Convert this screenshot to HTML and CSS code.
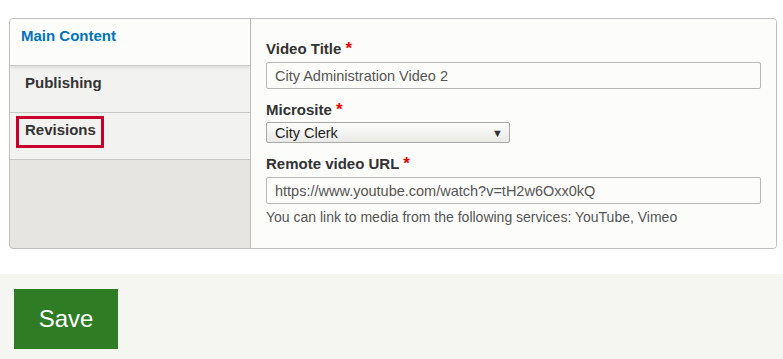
FILE: index.html
```html
<!DOCTYPE html>
<html>
<head>
<meta charset="utf-8">
<link rel="stylesheet" href="styles.css">
</head>
<body>
<div class="page">
  <div class="vtabs">
    <ul class="tab-list">
      <li class="tab active"><span class="tab-title">Main Content</span></li>
      <li class="tab"><span class="tab-title">Publishing</span></li>
      <li class="tab highlighted"><span class="tab-title">Revisions</span><span class="annot"></span></li>
    </ul>
    <div class="pane">
      <div class="field">
        <label class="label">Video Title <span class="req">*</span></label>
        <input class="text" type="text" value="City Administration Video 2">
      </div>
      <div class="field">
        <label class="label">Microsite <span class="req">*</span></label>
        <div class="select"><span>City Clerk</span><span class="arrow">&#9660;</span></div>
      </div>
      <div class="field">
        <label class="label">Remote video URL <span class="req">*</span></label>
        <input class="text" type="text" value="https://www.youtube.com/watch?v=tH2w6Oxx0kQ">
        <div class="desc">You can link to media from the following services: YouTube, Vimeo</div>
      </div>
    </div>
  </div>
  <div class="actions">
    <button class="save">Save</button>
  </div>
</div>
</body>
</html>
```
FILE: styles.css
```css
html, body {
  margin: 0;
  padding: 0;
  background: #fff;
  font-family: "Liberation Sans", Arial, sans-serif;
}
.page {
  padding-top: 18px;
}
.vtabs {
  display: flex;
  margin: 0 6px 0 9px;
  border: 1px solid #bfbfbf;
  border-radius: 4px;
  height: 231px;
  box-sizing: border-box;
  background: #e6e5e1;
  overflow: hidden;
}
.tab-list {
  list-style: none;
  margin: 0;
  padding: 0;
  width: 240px;
  flex: none;
  border-right: 1px solid #bfbfbf;
}
.tab {
  position: relative;
  padding: 8px 0 20px 15px;
  background: #f2f2f0;
  border-bottom: 1px solid #c8c8c6;
  font-size: 15px;
  line-height: 18px;
  font-weight: bold;
  color: #333;
}
.tab.active {
  background: #fcfcfa;
  padding-left: 11px;
  color: #0074bd;
  box-shadow: 0 2px 3px rgba(0,0,0,0.08);
  z-index: 1;
}
.annot {
  position: absolute;
  left: 6px;
  top: 3px;
  width: 82px;
  height: 26px;
  border: 3px solid #c8002b;
}
.pane {
  flex: 1;
  background: #fcfcfa;
  padding: 21px 15px 0 15px;
}
.field {
  margin-bottom: 12px;
}
.label {
  display: block;
  font-size: 15px;
  line-height: 18px;
  font-weight: bold;
  color: #333;
  margin-bottom: 4px;
}
.req {
  color: #e00;
  font-size: 17px;
  line-height: 0;
}
.text {
  display: block;
  box-sizing: border-box;
  width: 100%;
  height: 27px;
  margin: 0;
  border: 1px solid #b8b8b8;
  border-radius: 2px;
  background: #fcfcfa;
  padding: 0 8px;
  font-family: "Liberation Sans", Arial, sans-serif;
  font-size: 14.5px;
  color: #555;
}
.select {
  box-sizing: border-box;
  width: 244px;
  height: 21px;
  border: 1px solid #a8a8a8;
  border-radius: 2px;
  background: linear-gradient(#fdfdfc, #e9e9e6);
  display: flex;
  align-items: center;
  justify-content: space-between;
  padding: 0 6px 0 8px;
  font-size: 14.5px;
  color: #222;
  margin-top: -1px;
}
.arrow {
  font-size: 11px;
  color: #333;
}
.desc {
  margin-top: 5px;
  font-size: 14px;
  line-height: 16px;
  color: #555;
}
.actions {
  margin-top: 25px;
  background: #f5f5f2;
  padding: 15px 14px 20px;
}
.save {
  width: 104px;
  height: 60px;
  border: 0;
  background: #2e7d24;
  color: #fff;
  font-family: "Liberation Sans", Arial, sans-serif;
  font-size: 24px;
  padding: 0;
}
```
